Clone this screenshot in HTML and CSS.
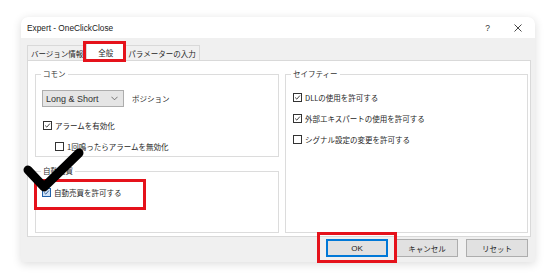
FILE: index.html
```html
<!DOCTYPE html>
<html lang="ja">
<head>
  <meta charset="UTF-8">
  <meta name="viewport" content="width=device-width, initial-scale=1.0">
  <title>Expert - OneClickClose</title>
  <link rel="stylesheet" href="styles.css">
</head>
<body>
  <div class="window">
    <div class="titlebar">
      <span class="title">Expert - OneClickClose</span>
      <span class="help">?</span>
      <svg class="close" viewBox="0 0 8 8"><path d="M0.5 0.5 L7.5 7.5 M7.5 0.5 L0.5 7.5" stroke="#333" stroke-width="0.9" fill="none"/></svg>
    </div>

    <div class="frame">
      <div class="tabs">
        <div class="tab">バージョン情報</div>
        <div class="tab active">全般</div>
        <div class="tab">パラメーターの入力</div>
      </div>

      <div class="panel">
        <div class="column">
          <fieldset class="group">
            <legend>コモン</legend>
            <div class="select-row">
              <div class="select">
                <span>Long &amp; Short</span>
                <svg class="chevron" viewBox="0 0 8 5"><path d="M0.5 0.5 L4 4 L7.5 0.5" stroke="#555" stroke-width="0.9" fill="none"/></svg>
              </div>
              <span class="select-label">ポジション</span>
            </div>
            <label class="check first">
              <span class="box"><svg viewBox="0 0 9 9"><path d="M1.5 4.5 L3.6 6.6 L7.6 2" stroke="#222" stroke-width="1.1" fill="none"/></svg></span>
              アラームを有効化
            </label>
            <label class="check indent">
              <span class="box"></span>
              1回鳴ったらアラームを無効化
            </label>
          </fieldset>

          <fieldset class="group grow">
            <legend>自動売買</legend>
            <label class="check first auto">
              <span class="box focus"><svg viewBox="0 0 9 9"><path d="M1.5 4.5 L3.6 6.6 L7.6 2" stroke="#1f4e8c" stroke-width="1.1" fill="none"/></svg></span>
              自動売買を許可する
            </label>
          </fieldset>
        </div>

        <fieldset class="group safety">
          <legend>セイフティー</legend>
          <label class="check first">
            <span class="box"><svg viewBox="0 0 9 9"><path d="M1.5 4.5 L3.6 6.6 L7.6 2" stroke="#222" stroke-width="1.1" fill="none"/></svg></span>
            DLLの使用を許可する
          </label>
          <label class="check">
            <span class="box"><svg viewBox="0 0 9 9"><path d="M1.5 4.5 L3.6 6.6 L7.6 2" stroke="#222" stroke-width="1.1" fill="none"/></svg></span>
            外部エキスパートの使用を許可する
          </label>
          <label class="check">
            <span class="box"></span>
            シグナル設定の変更を許可する
          </label>
        </fieldset>
      </div>

      <div class="buttons">
        <button class="btn default">OK</button>
        <button class="btn">キャンセル</button>
        <button class="btn">リセット</button>
      </div>
    </div>
  </div>

  <!-- annotations drawn over the screenshot -->
  <div class="mark mark-tab"></div>
  <div class="mark mark-auto"></div>
  <div class="mark mark-ok"></div>
  <svg class="tick" viewBox="0 0 70 55"><polyline points="10,27 26,44 61,10" stroke="#000" stroke-width="9" stroke-linecap="round" stroke-linejoin="round" fill="none"/></svg>
</body>
</html>
```

FILE: styles.css
```css
* {
  box-sizing: border-box;
}

body {
  margin: 0;
  height: 276px;
  overflow: hidden;
  position: relative;
  background-color: #fff;
  font-family: "Noto Sans CJK JP", sans-serif;
  font-size: 7.5px;
  color: #1e1e1e;
}

.window {
  margin: 17px 0 0 21px;
  width: 514px;
  height: 245px;
  display: flex;
  flex-direction: column;
  background-color: #f0f0f0;
  border-radius: 7px 7px 0 0;
  box-shadow: 0 2px 10px rgba(0, 0, 0, 0.14);
  overflow: hidden;
}

.titlebar {
  height: 21px;
  display: flex;
  align-items: center;
  padding: 0 13px 0 6px;
  background-color: #fff;
}

.title {
  flex: 1;
  font-family: "Liberation Sans", sans-serif;
  font-size: 8.3px;
  color: #222;
}

.help {
  margin-right: 24px;
  font-family: "Liberation Sans", sans-serif;
  font-size: 8.5px;
  color: #333;
}

.close {
  width: 8px;
  height: 8px;
}

.frame {
  flex: 1;
  display: flex;
  flex-direction: column;
  padding: 4px 4px 5px 6px;
}

.tabs {
  height: 18px;
  display: flex;
  align-items: flex-end;
  padding-left: 1px;
}

.tab {
  height: 15px;
  display: flex;
  align-items: center;
  padding: 0 3px;
  margin-left: -1px;
  background-color: #f0f0f0;
  border: 1px solid #d9d9d9;
  border-bottom: none;
}

.tab.active {
  height: 19px;
  margin-bottom: -1px;
  padding: 0 11px;
  background-color: #fff;
  position: relative;
  z-index: 1;
}

.panel {
  height: 177px;
  display: flex;
  gap: 6px;
  padding: 8px 2px 3px 7px;
  background-color: #fff;
  border: 1px solid #d9d9d9;
}

.column {
  width: 244px;
  display: flex;
  flex-direction: column;
  gap: 9px;
}

.group {
  margin: 0;
  min-width: 0;
  padding: 0 6px 4px 6px;
  border: 1px solid #dcdcdc;
}

.group legend {
  padding: 0 2px;
  margin-left: -1px;
  line-height: 10px;
  color: #333;
}

.grow {
  flex: 1;
}

.safety {
  flex: 1;
}

.select-row {
  margin-top: 11px;
  display: flex;
  align-items: center;
}

.select {
  width: 82px;
  height: 17px;
  display: flex;
  align-items: center;
  justify-content: space-between;
  padding: 0 5px 0 3px;
  background-color: #e5e5e5;
  border: 1px solid #adadad;
  font-family: "Liberation Sans", sans-serif;
  font-size: 9px;
  color: #333;
}

.chevron {
  width: 7px;
  height: 5px;
}

.select-label {
  margin-left: 8px;
}

.check {
  height: 12px;
  display: flex;
  align-items: center;
  gap: 3px;
  margin-top: 9px;
  margin-left: 1px;
}

.check.first {
  margin-top: 12px;
}

.check.indent {
  margin-left: 13px;
}

.check.auto {
  margin-top: 10px;
  margin-left: 0;
}

.box {
  width: 9px;
  height: 9px;
  flex: none;
  background-color: #fff;
  border: 1px solid #333;
}

.box svg {
  display: block;
  width: 7px;
  height: 7px;
}

.box.focus {
  border-color: #1f5fa8;
  background-color: #cfe2f6;
}

.buttons {
  height: 18px;
  margin-top: 2px;
  display: flex;
  justify-content: flex-end;
  gap: 8px;
  padding-right: 3px;
}

.btn {
  width: 62px;
  height: 18px;
  padding: 0;
  font-family: "Noto Sans CJK JP", sans-serif;
  font-size: 7.5px;
  color: #1e1e1e;
  background-color: #e1e1e1;
  border: 1px solid #adadad;
}

.btn.default {
  font-family: "Liberation Sans", sans-serif;
  font-size: 8px;
  border-color: #0078d7;
  box-shadow: inset 0 0 0 1px #0078d7;
}

.mark {
  position: absolute;
  z-index: 5;
  border: 3px solid #e5121b;
}

.mark-tab {
  left: 83px;
  top: 41px;
  width: 43px;
  height: 21px;
}

.mark-auto {
  left: 34px;
  top: 179px;
  width: 112px;
  height: 31px;
}

.mark-ok {
  left: 317px;
  top: 232px;
  width: 80px;
  height: 31px;
}

.tick {
  position: absolute;
  z-index: 6;
  left: 18px;
  top: 143px;
  width: 70px;
  height: 55px;
}
```
